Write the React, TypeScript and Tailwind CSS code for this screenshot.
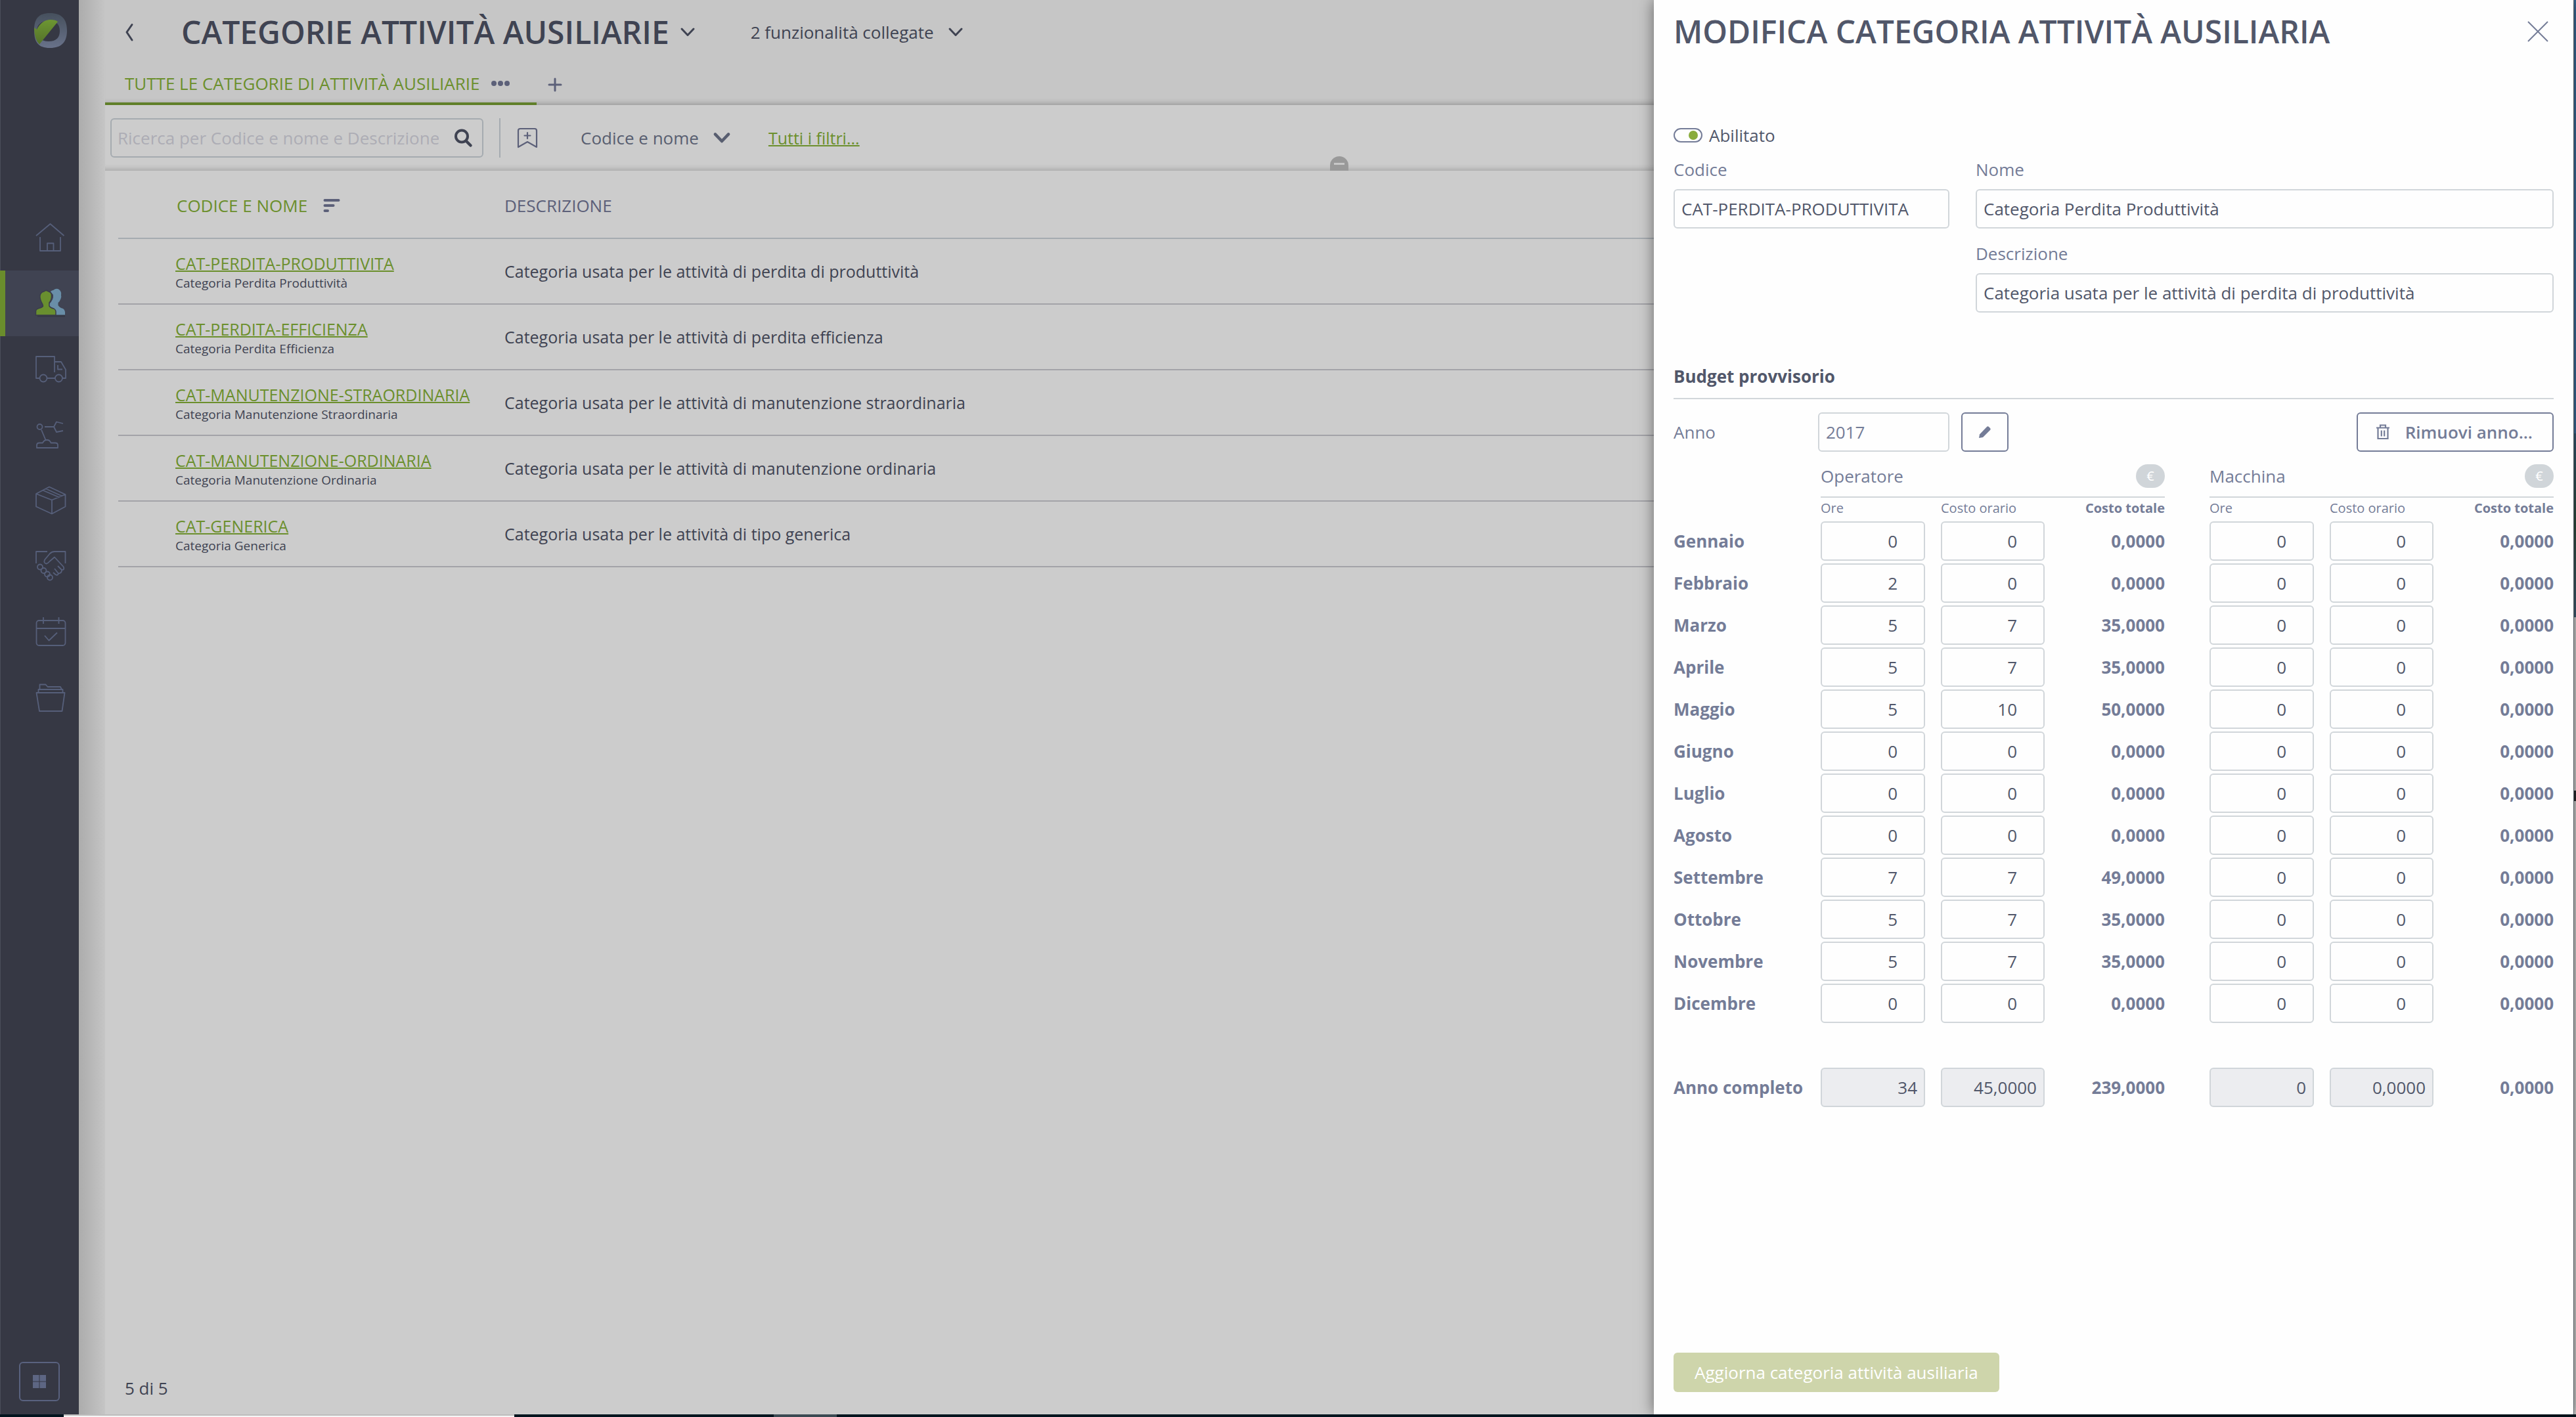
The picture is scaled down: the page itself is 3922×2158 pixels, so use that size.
import React from "react";

type Row = { code: string; name: string; description: string };

const rows: Row[] = [
  { code: "CAT-PERDITA-PRODUTTIVITA", name: "Categoria Perdita Produttività", description: "Categoria usata per le attività di perdita di produttività" },
  { code: "CAT-PERDITA-EFFICIENZA", name: "Categoria Perdita Efficienza", description: "Categoria usata per le attività di perdita efficienza" },
  { code: "CAT-MANUTENZIONE-STRAORDINARIA", name: "Categoria Manutenzione Straordinaria", description: "Categoria usata per le attività di manutenzione straordinaria" },
  { code: "CAT-MANUTENZIONE-ORDINARIA", name: "Categoria Manutenzione Ordinaria", description: "Categoria usata per le attività di manutenzione ordinaria" },
  { code: "CAT-GENERICA", name: "Categoria Generica", description: "Categoria usata per le attività di tipo generica" },
];

const months: [string, string, string, string][] = [
  ["Gennaio", "0", "0", "0,0000"],
  ["Febbraio", "2", "0", "0,0000"],
  ["Marzo", "5", "7", "35,0000"],
  ["Aprile", "5", "7", "35,0000"],
  ["Maggio", "5", "10", "50,0000"],
  ["Giugno", "0", "0", "0,0000"],
  ["Luglio", "0", "0", "0,0000"],
  ["Agosto", "0", "0", "0,0000"],
  ["Settembre", "7", "7", "49,0000"],
  ["Ottobre", "5", "7", "35,0000"],
  ["Novembre", "5", "7", "35,0000"],
  ["Dicembre", "0", "0", "0,0000"],
];

function Line({ children }: { children: React.ReactNode }) {
  return (
    <svg viewBox="0 0 60 60" className="size-15" fill="none" stroke="#565f7a" strokeWidth="1.8" strokeLinejoin="round" aria-hidden="true">
      {children}
    </svg>
  );
}

const navItems: { label: string; active?: boolean; icon: React.ReactNode }[] = [
  {
    label: "Home",
    icon: (
      <Line>
        <path d="M10 27 31.5 9 52.5 27M16 29V50H47V29M27 50V38.500h9.500V50" />
      </Line>
    ),
  },
  {
    label: "Persone",
    active: true,
    icon: (
      <svg viewBox="0 0 60 60" className="size-15" aria-hidden="true">
        <path d="M12 49h42" stroke="#2f323d" strokeWidth="3" opacity=".6" />
        <path fill="#698ea8" d="M32 12Q34 10 36 10Q41 6 45 9Q49 12 48 18Q49 20 47.500 23Q46 27 43.500 29V33Q46 37 51 38Q54 40 54 43V47.500H30V31Q37 24 36 17Z" />
        <path fill="#698f2f" stroke="#3a3d4b" strokeWidth="1.500" d="M9.500 48V42Q9.500 39 14 37.500Q20 36 20.500 34Q20.500 32 18.500 29Q14.500 21 16.500 16Q19 12 22 12Q25 9 28 11.500Q34 13 33.500 19Q33.500 25 30 29V34Q32 37 37 38Q40 40 40 42.500V48Z" />
      </svg>
    ),
  },
  {
    label: "Logistica",
    icon: (
      <Line>
        <path d="M15.500 44H10V11H38V35M38 19H48L55 31V44H50M26.500 44H39M43 24V30.500H50" />
        <circle cx="21" cy="44" r="5.500" />
        <circle cx="44.500" cy="44" r="5.500" />
      </Line>
    ),
  },
  {
    label: "Macchine",
    icon: (
      <Line>
        <circle cx="15.500" cy="18" r="4" />
        <path d="M23 18H37M51 13 41 10.500 37 18 41 26 51 24M18 22.500 24.500 38" />
        <path d="M11 50V46Q11 42.500 15 42.500H20Q22 38 26.500 38Q31 38 32.500 42.500H39Q43 42.500 43 46V50Z" />
      </Line>
    ),
  },
  {
    label: "Magazzino",
    icon: (
      <Line>
        <path d="M10 20 30 9.500 54.500 21 34 29.500ZM10 20V39.500L34 50.500 54.500 39.500V21M34 29.500V50.500M21 15 45.500 25.500M25 12.500 49.500 23.500" />
      </Line>
    ),
  },
  {
    label: "Partner",
    icon: (
      <Line>
        <path d="M10 26V8H27M54.500 26V8H38Q34 8 31 11L23 20.500Q21 25.500 25.500 26.500Q28 26 31 22.500L38 16.500 51.500 31Q54 36 49 36L43 30M49 36Q49 41 44 41.500L38 34M44 41.500Q43 45 39.500 43L36 40" />
        <circle cx="16" cy="31.500" r="4" />
        <circle cx="21.500" cy="37" r="4" />
        <circle cx="27" cy="42.500" r="4" />
        <circle cx="31" cy="47.500" r="4" />
      </Line>
    ),
  },
  {
    label: "Calendario",
    icon: (
      <Line>
        <rect x="10.500" y="13" width="44" height="38" rx="4" />
        <path d="M10.500 25H54.500M21 8V18M44.500 8V18M23 36 29.500 43.500 42 31.500" />
      </Line>
    ),
  },
  {
    label: "Documenti",
    icon: (
      <Line>
        <path d="M10.500 23H53.500L49.500 51H15ZM13.500 23V18H50.500V23M15.500 18V10.500H24.500L27.500 14H47L49 18" />
      </Line>
    ),
  },
];

function Chevron({ className, width }: { className: string; width: number }) {
  return (
    <svg viewBox="0 0 24 16" className={className} fill="none" stroke="currentColor" strokeWidth={width} strokeLinecap="round" strokeLinejoin="round" aria-hidden="true">
      <path d="M3 3 12 12.500 21 3" />
    </svg>
  );
}

function Sidebar() {
  return (
    <aside className="flex w-[120px] shrink-0 flex-col border-l border-[#4a4d5a] bg-[#363844]">
      <div className="h-[312px] pt-5 pl-[51px]">
        <svg viewBox="0 0 50 53" className="h-[53px] w-[50px]" aria-label="Logo" role="img">
          <defs>
            <linearGradient id="ring" x1="0" y1="0" x2="0" y2="1">
              <stop offset="0" stopColor="#46505d" />
              <stop offset="1" stopColor="#69728a" />
            </linearGradient>
            <linearGradient id="leaf" x1="0" y1="0" x2="0" y2="1">
              <stop offset="0" stopColor="#6d9632" />
              <stop offset="1" stopColor="#54722a" />
            </linearGradient>
          </defs>
          <path fill="url(#ring)" fillRule="evenodd" d="M24 0C42 0 50 9 50 26.500S42 53 24 53 0 44 0 26.500 6 0 24 0ZM22 12C10 12 4 18 4 27S10 43 22 43 39 37 39 27 34 12 22 12Z" />
          <path fill="url(#leaf)" d="M0 22 4 25Q11 11 24 10Q33 10 36 13L8 47.500Q0 40 0 22Z" />
        </svg>
      </div>
      <nav className="flex flex-col">
        {navItems.map((item) => (
          <a
            key={item.label}
            href="#"
            aria-label={item.label}
            className={item.active ? "-ml-px flex h-[100px] items-center border-l-8 border-[#6a8d2c] bg-[#404352] pl-[37px]" : "flex h-[100px] items-center pl-11"}
          >
            {item.icon}
          </a>
        ))}
      </nav>
      <button aria-label="Applicazioni" className="mt-auto mb-5 ml-7 flex h-15 w-[62px] items-center justify-center rounded-md border-2 border-[#59627f]">
        <svg viewBox="0 0 20 20" className="size-5" fill="#5d6683" aria-hidden="true">
          <path d="M0 0H9.500V9.500H0ZM10.500 0H20V9.500H10.500ZM0 10.500H9.500V20H0ZM10.500 10.500H20V20H10.500Z" />
        </svg>
      </button>
    </aside>
  );
}

function Main() {
  return (
    <main className="flex min-w-0 flex-1 flex-col bg-[#cccccc] text-[#3f4352]">
      <header className="bg-[#c6c6c6]">
        <div className="flex h-[98px] items-center">
          <button aria-label="Indietro" className="ml-[26px] flex h-10 w-[90px] items-center">
            <svg viewBox="0 0 20 30" className="h-[30px] w-5" fill="none" stroke="currentColor" strokeWidth="3" strokeLinecap="round" strokeLinejoin="round" aria-hidden="true">
              <path d="M15 3.500 7 15 15 27" />
            </svg>
          </button>
          <h1 className="text-5xl leading-[72px] font-semibold whitespace-nowrap">CATEGORIE ATTIVITÀ AUSILIARIE</h1>
          <button aria-label="Cambia vista" className="ml-4">
            <Chevron className="h-4 w-6" width={3} />
          </button>
          <button className="ml-[84px] flex items-center gap-[21px] whitespace-nowrap">
            2 funzionalità collegate
            <Chevron className="h-4 w-6" width={3} />
          </button>
        </div>
        <div className="flex h-[62px] items-stretch shadow-[inset_0_-10px_8px_-8px_rgba(0,0,0,0.25)]">
          <div className="flex items-center gap-4 border-b-4 border-[#607f29] pr-10 pl-[30px]">
            <a href="#" className="whitespace-nowrap text-[#6b8f2c]">TUTTE LE CATEGORIE DI ATTIVITÀ AUSILIARIE</a>
            <button aria-label="Opzioni scheda">
              <svg viewBox="0 0 30 10" className="h-[10px] w-[30px]" fill="#5c6079" aria-hidden="true">
                <circle cx="5" cy="5" r="4" />
                <circle cx="15" cy="5" r="4" />
                <circle cx="25" cy="5" r="4" />
              </svg>
            </button>
          </div>
          <button aria-label="Aggiungi scheda" className="ml-[17px]">
            <svg viewBox="0 0 22 22" className="size-[22px]" stroke="#5c6079" strokeWidth="3" strokeLinecap="round" aria-hidden="true">
              <path d="M11 2V20M2 11H20" />
            </svg>
          </button>
        </div>
      </header>

      <section className="relative flex h-[100px] items-center pl-2 shadow-[inset_0_-10px_8px_-8px_rgba(0,0,0,0.2)]">
        <label className="flex h-15 w-[568px] items-center rounded-md border-2 border-[#a5abb0] pr-[14px]">
          <input
            type="search"
            aria-label="Ricerca"
            placeholder="Ricerca per Codice e nome e Descrizione"
            className="h-full min-w-0 flex-1 bg-transparent pl-[9px] outline-none placeholder:text-[#adadb5]"
          />
          <svg viewBox="0 0 30 30" className="size-[30px]" fill="none" stroke="#3f4352" strokeWidth="4" strokeLinecap="round" aria-hidden="true">
            <circle cx="13" cy="12.500" r="9" />
            <path d="M19.500 19.500 26.500 26.500" strokeWidth="4.500" />
          </svg>
        </label>
        <div className="ml-6 h-15 w-[2px] bg-[#a5abb0]" />
        <button aria-label="Salva filtro" className="ml-6">
          <svg viewBox="0 0 34 32" className="h-8 w-[34px]" fill="none" stroke="#5c6079" strokeWidth="2.200" strokeLinejoin="round" strokeLinecap="round" aria-hidden="true">
            <path d="M3 30V5Q3 2 6 2H28Q31 2 31 5V30L17 22ZM17 8V17M12.500 12.500H21.500" />
          </svg>
        </button>
        <button className="ml-[64px] flex items-center gap-[21px] whitespace-nowrap text-[#585e70]">
          Codice e nome
          <Chevron className="h-[18px] w-7" width={4} />
        </button>
        <a href="#" className="ml-[57px] text-[25px] whitespace-nowrap text-[#6b8f2c] underline decoration-2">Tutti i filtri...</a>
        <button aria-label="Comprimi filtri" className="absolute bottom-0 left-1/2 flex h-[22px] w-7 -translate-x-1/2 items-center justify-center rounded-t-[14px] bg-[#999999]">
          <span className="h-[3px] w-4 bg-[#c8c8c8]" />
        </button>
      </section>

      <div className="pl-5">
        <table className="w-full table-fixed border-separate border-spacing-0 text-left">
          <thead>
            <tr className="h-[104px]">
              <th scope="col" className="w-[588px] border-b-2 border-[#a5abb0] pt-1 pl-[89px] font-normal text-[#6b8f2c]">
                <button className="flex items-center gap-6">
                  CODICE E NOME
                  <svg viewBox="0 0 26 22" className="h-[22px] w-[26px]" stroke="#5c6079" strokeWidth="4" strokeLinecap="round" aria-hidden="true">
                    <path d="M2.500 3H23.500M2.500 11H15.500M2.500 19H7" />
                  </svg>
                </button>
              </th>
              <th scope="col" className="border-b-2 border-[#a5abb0] pt-1 font-normal text-[#5c6079]">DESCRIZIONE</th>
            </tr>
          </thead>
          <tbody className="text-[25px]">
            {rows.map((row) => (
              <tr key={row.code} className="h-[100px]">
                <td className="border-b-2 border-[#a3a3a8] pl-[87px]">
                  <a href="#" className="block w-max leading-9 text-[#6b8f2c] underline decoration-2">{row.code}</a>
                  <div className="text-[19px] leading-6">{row.name}</div>
                </td>
                <td className="border-b-2 border-[#a3a3a8]">{row.description}</td>
              </tr>
            ))}
          </tbody>
        </table>
      </div>

      <footer className="mt-auto flex h-20 items-center pl-[30px]">5 di 5</footer>
    </main>
  );
}

function Field({ id, label, value }: { id: string; label: string; value: string }) {
  return (
    <div>
      <label htmlFor={id} className="mb-[10px] block leading-10 text-[#747c97]">{label}</label>
      <input id={id} defaultValue={value} className="h-15 w-full rounded-md border-2 border-[#d1d6da] px-[10px]" />
    </div>
  );
}

function Amount({ label, value, total }: { label: string; value: string; total?: boolean }) {
  return (
    <input
      aria-label={label}
      defaultValue={value}
      readOnly={total}
      className={
        total
          ? "block h-15 w-full rounded-md border-2 border-[#d1d6da] bg-[#ecedf0] pr-[10px] text-right"
          : "block h-15 w-full rounded-md border-2 border-[#d1d6da] pr-10 text-right"
      }
    />
  );
}

function BudgetRow({ label, cells, total }: { label: string; cells: string[]; total?: boolean }) {
  return (
    <tr>
      <th scope="row" className="p-0 text-left font-bold whitespace-nowrap text-[#747c97]">{label}</th>
      <td className="p-0 pr-6"><Amount label={`${label} operatore ore`} value={cells[0]} total={total} /></td>
      <td className="p-0 pr-6"><Amount label={`${label} operatore costo orario`} value={cells[1]} total={total} /></td>
      <td className="p-0 text-right font-bold text-[#747c97]">{cells[2]}</td>
      <td className="p-0" />
      <td className="p-0 pr-6"><Amount label={`${label} macchina ore`} value={cells[3]} total={total} /></td>
      <td className="p-0 pr-6"><Amount label={`${label} macchina costo orario`} value={cells[4]} total={total} /></td>
      <td className="p-0 text-right font-bold text-[#747c97]">{cells[5]}</td>
    </tr>
  );
}

function GroupHeader({ label }: { label: string }) {
  return (
    <th scope="colgroup" colSpan={3} className="p-0 font-normal">
      <div className="flex h-[54px] items-center justify-between border-b-2 border-[#d1d6da] pb-[10px]">
        {label}
        <span className="flex h-9 w-11 items-center justify-center rounded-full bg-[#d0d5d9] text-xl text-white">€</span>
      </div>
    </th>
  );
}

function SubHeaders() {
  return (
    <>
      <th scope="col" className="p-0 pb-1 font-normal">Ore</th>
      <th scope="col" className="p-0 pb-1 font-normal">Costo orario</th>
      <th scope="col" className="p-0 pb-1 text-right font-bold">Costo totale</th>
    </>
  );
}

function Drawer() {
  return (
    <form className="absolute inset-y-0 right-0 flex w-[1400px] max-w-full flex-col bg-[#fefefe] px-[30px] text-[#51576a] shadow-[0_0_22px_rgba(0,0,0,0.5)]">
      <div className="flex h-24 items-center justify-between pr-2">
        <h2 className="text-5xl leading-[72px] font-semibold whitespace-nowrap">MODIFICA CATEGORIA ATTIVITÀ AUSILIARIA</h2>
        <button type="button" aria-label="Chiudi">
          <svg viewBox="0 0 32 32" className="size-8" stroke="#747c97" strokeWidth="2" aria-hidden="true">
            <path d="M1 1 31 31M31 1 1 31" />
          </svg>
        </button>
      </div>

      <label className="mt-[90px] flex h-10 items-center gap-[10px] self-start">
        <input
          type="checkbox"
          defaultChecked
          className="flex h-[22px] w-11 appearance-none items-center rounded-full border-2 border-[#747c97] px-[5px] before:block before:size-[14px] before:rounded-full before:bg-[#b5bac2] checked:justify-end checked:before:bg-[#8aac3c]"
        />
        Abilitato
      </label>

      <div className="mt-3 grid grid-cols-[420px_1fr] gap-x-10 gap-y-[18px]">
        <Field id="codice" label="Codice" value="CAT-PERDITA-PRODUTTIVITA" />
        <Field id="nome" label="Nome" value="Categoria Perdita Produttività" />
        <div className="col-start-2">
          <Field id="descrizione" label="Descrizione" value="Categoria usata per le attività di perdita di produttività" />
        </div>
      </div>

      <h3 className="mt-[77px] border-b-2 border-[#d1d6da] pb-[13px] leading-10 font-bold">Budget provvisorio</h3>

      <div className="mt-5 flex items-center text-[#747c97]">
        <label htmlFor="anno" className="w-[220px]">Anno</label>
        <input id="anno" readOnly value="2017" className="h-15 w-[200px] rounded-md border-2 border-[#d1d6da] px-[10px]" />
        <button type="button" aria-label="Modifica anno" className="ml-[18px] flex h-15 w-[72px] items-center justify-center rounded-md border-2 border-[#747c97]">
          <svg viewBox="0 0 20 20" className="size-5" fill="currentColor" aria-hidden="true">
            <path d="M1 19 2 13.500 13 2Q14.500 .5 16 2L18 4Q19.500 5.500 18 7L7 18Z" />
          </svg>
        </button>
        <button type="button" className="ml-auto flex h-15 items-center gap-6 rounded-md border-2 border-[#747c97] pr-[30px] pl-7 font-semibold whitespace-nowrap">
          <svg viewBox="0 0 20 24" className="h-6 w-5" fill="none" stroke="currentColor" strokeWidth="2.200" aria-hidden="true">
            <path d="M0 5.500H20M6 5V1.500H14V5M2.500 6V22H17.500V6M7.800 9.500V18.500M12.200 9.500V18.500" />
          </svg>
          Rimuovi anno...
        </button>
      </div>

      <table className="mt-3 w-full table-fixed border-separate border-spacing-x-0 border-spacing-y-1">
        <colgroup>
          <col className="w-[224px]" />
          <col className="w-[183px]" />
          <col className="w-[182px]" />
          <col />
          <col className="w-[68px]" />
          <col className="w-[183px]" />
          <col className="w-[182px]" />
          <col />
        </colgroup>
        <thead className="text-left text-[#747c97]">
          <tr>
            <td className="p-0" />
            <GroupHeader label="Operatore" />
            <td className="p-0" />
            <GroupHeader label="Macchina" />
          </tr>
          <tr className="text-xl leading-6">
            <td className="p-0" />
            <SubHeaders />
            <td className="p-0" />
            <SubHeaders />
          </tr>
        </thead>
        <tbody>
          {months.map(([month, hours, cost, sum]) => (
            <BudgetRow key={month} label={month} cells={[hours, cost, sum, "0", "0", "0,0000"]} />
          ))}
        </tbody>
        <tfoot>
          <tr className="h-15">
            <td colSpan={8} className="p-0" />
          </tr>
          <BudgetRow label="Anno completo" cells={["34", "45,0000", "239,0000", "0", "0,0000", "0,0000"]} total />
        </tfoot>
      </table>

      <button type="submit" disabled className="mt-auto mb-[34px] h-15 self-start rounded-md bg-[#ced5ab] px-8 whitespace-nowrap text-white">
        Aggiorna categoria attività ausiliaria
      </button>
    </form>
  );
}

export default function App() {
  return (
    <div className="flex min-h-screen flex-col font-['Open_Sans',sans-serif] text-[26px] leading-10">
      <div className="flex flex-1">
        <div className="relative flex min-w-0 flex-1">
          <Sidebar />
          <div className="w-10 shrink-0 bg-linear-to-r from-[#acacac] to-[#c5c5c5]" />
          <Main />
          <Drawer />
        </div>
        <div className="flex w-1 shrink-0 flex-col border-l border-[#6f7880] bg-[#c8c8c8]">
          <div className="h-[660px] bg-[#3b6994]" />
          <div className="h-[280px] bg-linear-to-b from-[#33566f] via-[#2d4a3c] to-[#3f5a70]" />
          <div className="mt-[264px] h-4 bg-[#26282b]" />
        </div>
      </div>
      <div className="flex h-1 bg-[#00141e]">
        <div className="ml-[97px] w-[686px] border-t-2 border-[#bdbdbd] bg-[#f5f5f5]" />
        <div className="ml-[395px] w-24 bg-[#3a4a52]" />
      </div>
    </div>
  );
}
